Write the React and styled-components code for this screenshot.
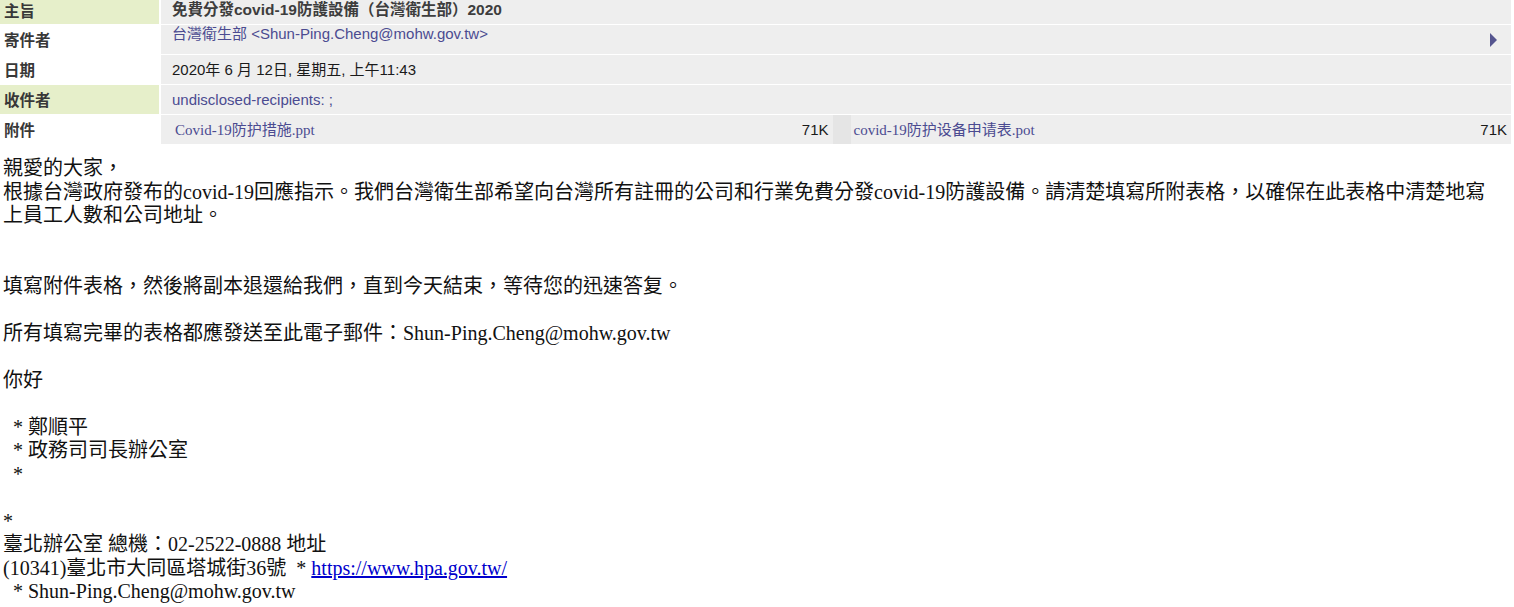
import React from "react";
import styled, { createGlobalStyle } from "styled-components";

const GlobalStyle = createGlobalStyle`
  html, body {
    margin: 0;
    padding: 0;
    background: #ffffff;
  }
`;

const headers = [
  { label: "主旨", tone: "green", height: 24 },
  { label: "寄件者", tone: "white", height: 29 },
  { label: "日期", tone: "white", height: 29 },
  { label: "收件者", tone: "green", height: 29 },
  { label: "附件", tone: "white", height: 29 },
];

const attachments = [
  { name: "Covid-19防护措施.ppt", size: "71K" },
  { name: "covid-19防护设备申请表.pot", size: "71K" },
];

const bodyLines = [
  "親愛的大家，",
  "根據台灣政府發布的covid-19回應指示。我們台灣衛生部希望向台灣所有註冊的公司和行業免費分發covid-19防護設備。請清楚填寫所附表格，以確保在此表格中清楚地寫",
  "上員工人數和公司地址。",
  "",
  "",
  "填寫附件表格，然後將副本退還給我們，直到今天結束，等待您的迅速答复。",
  "",
  "所有填寫完畢的表格都應發送至此電子郵件：Shun-Ping.Cheng@mohw.gov.tw",
  "",
  "你好",
  "",
  "  * 鄭順平",
  "  * 政務司司長辦公室",
  "  *",
  "",
  "*",
  "臺北辦公室 總機：02-2522-0888 地址",
];

const App = () => {
  return (
    <Page>
      <GlobalStyle />
      <HeaderTable>
        <Label $tone={headers[0].tone} $height={headers[0].height}>
          {headers[0].label}
        </Label>
        <Value $height={headers[0].height}>
          <Subject>免費分發covid-19防護設備（台灣衛生部）2020</Subject>
        </Value>

        <Label $tone={headers[1].tone}>{headers[1].label}</Label>
        <Value $top>
          <LinkText>台灣衛生部 &lt;Shun-Ping.Cheng@mohw.gov.tw&gt;</LinkText>
          <Arrow width="7" height="14" viewBox="0 0 7 14">
            <polygon points="0,0 7,7 0,14" fill="#55558f" />
          </Arrow>
        </Value>

        <Label $tone={headers[2].tone}>{headers[2].label}</Label>
        <Value>
          <PlainText>2020年 6 月 12日, 星期五, 上午11:43</PlainText>
        </Value>

        <Label $tone={headers[3].tone}>{headers[3].label}</Label>
        <Value>
          <LinkText>undisclosed-recipients: ;</LinkText>
        </Value>

        <Label $tone={headers[4].tone}>{headers[4].label}</Label>
        <Value $tight>
          <Attachment>
            <AttachName>{attachments[0].name}</AttachName>
            <PlainText>{attachments[0].size}</PlainText>
          </Attachment>
          <AttachGap />
          <Attachment>
            <AttachName>{attachments[1].name}</AttachName>
            <PlainText>{attachments[1].size}</PlainText>
          </Attachment>
        </Value>
      </HeaderTable>

      <MessageBody>
        {bodyLines.map((line, i) => (
          <Line key={i}>{line === "" ? "\u00a0" : line}</Line>
        ))}
        <Line>
          (10341)臺北市大同區塔城街36號  *{" "}
          <BodyLink href="#">https://www.hpa.gov.tw/</BodyLink>
        </Line>
        <Line>  * Shun-Ping.Cheng@mohw.gov.tw</Line>
      </MessageBody>
    </Page>
  );
};

export default App;

const Page = styled.div`
  width: 1514px;
  background: #ffffff;
`;

const HeaderTable = styled.div`
  width: 1511px;
  display: grid;
  grid-template-columns: 159px 1fr;
  column-gap: 2px;
  row-gap: 1px;
  background: #ffffff;
`;

const Label = styled.div`
  height: ${(p) => p.$height || 29}px;
  box-sizing: border-box;
  padding: 0 0 ${(p) => (p.$height && p.$height < 29 ? 29 - p.$height : 1)}px 4px;
  display: flex;
  align-items: center;
  background: ${(p) => (p.$tone === "green" ? "#e6efca" : "#ffffff")};
  color: #383838;
  font-family: "Noto Sans CJK TC", "Liberation Sans", sans-serif;
  font-weight: 700;
  font-size: 15.5px;
  line-height: 18px;
`;

const Value = styled.div`
  height: ${(p) => p.$height || 29}px;
  box-sizing: border-box;
  padding: 0 ${(p) => (p.$tight ? "2px" : "14px")}
    ${(p) => (p.$height && p.$height < 29 ? 29 - p.$height : 0)}px 11px;
  display: flex;
  align-items: ${(p) => (p.$top ? "flex-start" : "center")};
  justify-content: space-between;
  background: #eeeeee;
  font-family: "Liberation Sans", "Noto Sans CJK TC", sans-serif;
  font-size: 15px;
  line-height: 18px;
`;

const Subject = styled.span`
  font-weight: 700;
  font-size: 15.5px;
  color: #3d3d3d;
`;

const LinkText = styled.span`
  color: #4b4b91;
`;

const PlainText = styled.span`
  color: #1a1a1a;
`;

const Arrow = styled.svg`
  display: block;
  align-self: center;
`;

const Attachment = styled.div`
  flex: 1;
  height: 100%;
  display: flex;
  align-items: center;
  justify-content: space-between;
  padding: 0 2px 0 3px;
`;

const AttachName = styled.span`
  color: #4b4b91;
  font-family: "Liberation Serif", "Noto Sans CJK SC", serif;
  font-size: 15px;
`;

const AttachGap = styled.div`
  width: 18px;
  height: 100%;
  margin-left: 2px;
  background: #e5e5e5;
`;

const MessageBody = styled.div`
  margin-top: 13px;
  padding-left: 3px;
  font-family: "Liberation Serif", "Noto Sans CJK TC", serif;
  font-size: 20px;
  line-height: 23.5px;
  color: #111111;
`;

const Line = styled.div`
  white-space: pre-wrap;
`;

const BodyLink = styled.a`
  color: #0000cc;
  text-decoration: underline;
`;
